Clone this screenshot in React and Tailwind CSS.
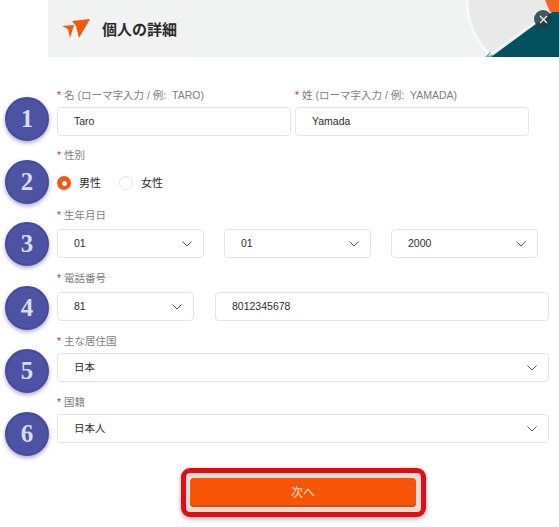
const Chevron = () => (
  <svg width="10" height="6" viewBox="0 0 10 6" className="shrink-0" fill="none" stroke="#555" strokeWidth="1">
    <path d="M0.5 0.5L5 5l4.5-4.5" />
  </svg>
);

const Label = ({ children, className = "" }) => (
  <div className={`h-[14px] flex items-center text-[10.5px] leading-[14px] text-[#7d7d7d] ${className}`}>
    <span className="text-[#c9304a] mr-[3px]">*</span>
    {children}
  </div>
);

const Input = ({ value, className = "" }) => (
  <div className={`h-[29px] border border-[#e4e4e4] rounded-[4px] bg-white flex items-center pl-4 text-[10.5px] text-[#2c2c2c] ${className}`}>
    {value}
  </div>
);

const Select = ({ value, className = "" }) => (
  <div className={`h-[29px] border border-[#e4e4e4] rounded-[4px] bg-white flex items-center justify-between pl-4 pr-[11px] text-[10.5px] text-[#2c2c2c] ${className}`}>
    <span>{value}</span>
    <Chevron />
  </div>
);

const Badge = ({ n, className }) => (
  <div className={`absolute left-[5px] w-[44px] h-[44px] rounded-full bg-[#4e52a3] border-2 border-[#454a9c] shadow-[0_2px_4px_rgba(60,60,140,0.45)] flex items-center justify-center text-[#d8dcf4] text-[25px] font-bold font-['Liberation_Serif',serif] ${className}`}>
    {n}
  </div>
);

export default function App() {
  return (
    <div className="relative w-[559px] h-[527px] overflow-hidden bg-white font-['Liberation_Sans','Noto_Sans_CJK_JP',sans-serif]">
      <header className="relative ml-12 h-[57px] bg-[#f1f2f2] flex items-center pl-[14px] gap-3 overflow-hidden">
        <svg width="28" height="20" viewBox="0 0 28 20" className="shrink-0">
          <path d="M10 2L28 0 17 19 14 7z" fill="#f4570d" />
          <path d="M0 7l12-1-4 13-2-9z" fill="#f4570d" />
        </svg>
        <h1 className="mt-[3px] text-[15px] font-bold text-[#2a2a2a]">個人の詳細</h1>
        <svg width="111" height="57" viewBox="0 0 111 57" className="absolute right-0 top-0">
          <circle cx="97" cy="0" r="78" fill="#e9e9e9" stroke="#f9f9f9" strokeWidth="3" />
          <path d="M37 57l5-5 4 5z" fill="#6fa9b3" />
          <path d="M43 57L111 7V57z" fill="#03515f" />
          <path d="M41 55.5L111 5" stroke="#f7f7f7" strokeWidth="1.5" />
          <path d="M97 0h14v12h-9z" fill="#f4651f" />
        </svg>
        <div className="absolute left-[486px] top-[10px] w-[18px] h-[18px] rounded-full bg-[#1f3d44]/85 flex items-center justify-center">
          <svg width="9" height="9" viewBox="0 0 9 9" stroke="#fff" strokeWidth="1.3"><path d="M1 1l7 7M8 1L1 8" /></svg>
        </div>
      </header>

      <main className="pl-[57px] pr-[10px]">
        <div className="pt-[31px] flex gap-1 pr-[20px]">
          <div className="flex-1">
            <Label className="mb-[5px]">名 (ローマ字入力 / 例:&nbsp; TARO)</Label>
            <Input value="Taro" />
          </div>
          <div className="flex-1">
            <Label className="mb-[5px]">姓 (ローマ字入力 / 例:&nbsp; YAMADA)</Label>
            <Input value="Yamada" />
          </div>
        </div>

        <Label className="mt-[12px]">性別</Label>
        <div className="mt-[11px] h-[20px] flex items-center text-[11px] text-[#2c2c2c]">
          <span className="w-[14px] h-[14px] rounded-full bg-[#f4570d] flex items-center justify-center">
            <span className="w-[5px] h-[5px] rounded-full bg-white" />
          </span>
          <span className="ml-[8px]">男性</span>
          <span className="ml-[18px] w-[14px] h-[14px] rounded-full border border-[#e4e4e4] bg-white" />
          <span className="ml-[8px]">女性</span>
        </div>

        <Label className="mt-[15px] mb-[7px]">生年月日</Label>
        <div className="flex gap-5 pr-[11px]">
          <Select value="01" className="flex-1" />
          <Select value="01" className="flex-1" />
          <Select value="2000" className="flex-1" />
        </div>

        <Label className="mt-[13px] mb-[7px]">電話番号</Label>
        <div className="flex gap-[21px]">
          <Select value="81" className="w-[137px]" />
          <Input value="8012345678" className="flex-1" />
        </div>

        <Label className="mt-[13px] mb-[5px]">主な居住国</Label>
        <Select value="日本" />

        <Label className="mt-[13px] mb-[5px]">国籍</Label>
        <Select value="日本人" />

        <div className="mt-[25px] ml-[124px] w-[245px] h-[49px] pl-[4px] rounded-[9px] border-[5px] border-[#e60a12] bg-[#e4dcd6] shadow-[0_2px_5px_rgba(0,0,0,0.3)] flex items-center">
          <button className="w-[226px] h-[29px] rounded-[4px] bg-[#f75407] shadow-[inset_0_-2px_0_#d94c0c] text-[#fbe3d3] text-[12px]">次へ</button>
        </div>
      </main>

      <Badge n="1" className="top-[97px]" />
      <Badge n="2" className="top-[160px]" />
      <Badge n="3" className="top-[222px]" />
      <Badge n="4" className="top-[286px]" />
      <Badge n="5" className="top-[349px]" />
      <Badge n="6" className="top-[412px]" />
    </div>
  );
}
